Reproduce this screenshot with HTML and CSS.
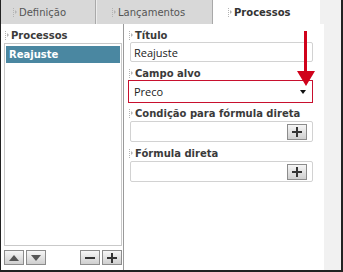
FILE: index.html
```html
<!DOCTYPE html>
<html lang="pt">
<head>
    <meta charset="UTF-8">
    <title>Processos</title>
    <link rel="stylesheet" href="styles.css">
</head>
<body>

    <div class="frame">

        <!-- Abas -->
        <div class="tabs">
            <div class="tab tab-first"><span class="grip"></span>Definição</div>
            <div class="tab"><span class="grip"></span>Lançamentos</div>
            <div class="tab active"><span class="grip"></span>Processos</div>
        </div>

        <div class="main">
            <div class="panel">

                <!-- Lista de processos -->
                <div class="left">
                    <div class="label"><span class="grip"></span>Processos</div>
                    <ul class="list">
                        <li class="selected">Reajuste</li>
                    </ul>
                    <div class="list-actions">
                        <div class="btn-group">
                            <button class="btn"><span class="tri up"></span></button>
                            <button class="btn"><span class="tri down"></span></button>
                        </div>
                        <div class="btn-group">
                            <button class="btn"><span class="minus"></span></button>
                            <button class="btn"><span class="plus"></span></button>
                        </div>
                    </div>
                </div>

                <!-- Formulário do processo -->
                <div class="right">
                    <div class="label"><span class="grip"></span>Título</div>
                    <div class="field">Reajuste</div>

                    <div class="label"><span class="grip"></span>Campo alvo</div>
                    <div class="field select">Preco<span class="caret"></span></div>

                    <div class="label"><span class="grip"></span>Condição para fórmula direta</div>
                    <div class="field box"><button class="btn"><span class="plus"></span></button></div>

                    <div class="label"><span class="grip"></span>Fórmula direta</div>
                    <div class="field box"><button class="btn"><span class="plus"></span></button></div>

                    <!-- seta de destaque -->
                    <svg class="arrow" width="20" height="56" viewBox="0 0 20 56">
                        <rect x="8" y="0" width="3" height="42" fill="#d0021b"/>
                        <polygon points="1,40 19,40 10,55" fill="#d0021b"/>
                    </svg>
                </div>

            </div>
        </div>
    </div>

</body>
</html>
```

FILE: styles.css
```css
* {
    box-sizing: border-box;
}

body {
    margin: 0;
    font-family: "DejaVu Sans", Verdana, sans-serif;
    font-size: 10px;
    color: #333;
    background-color: #fff;
}

.frame {
    width: 343px;
    height: 272px;
    border-left: 1px solid #222;
    border-right: 2px solid #222;
    border-bottom: 2px solid #222;
    background-color: #f1f1f1;
    display: flex;
    flex-direction: column;
}

/* Abas */
.tabs {
    height: 24px;
    display: flex;
}

.tab {
    display: flex;
    align-items: center;
    padding-left: 15px;
    background-color: #d8d8d8;
    color: #555;
    border-right: 1px solid #a9a9a9;
    border-left: 1px solid #ececec;
    width: 117px;
}

.tab-first {
    width: 95px;
    padding-left: 12px;
    border-left: none;
}

.tab.active {
    width: 107px;
    background-color: #fff;
    color: #333;
    font-weight: bold;
    border: none;
}

.grip {
    display: inline-block;
    width: 4px;
    height: 9px;
    margin-right: 2px;
    background: linear-gradient(#b4b4b4 50%, transparent 50%) 0 0 / 1px 2px repeat-y;
    position: relative;
}

.grip::after {
    content: "";
    position: absolute;
    left: 2px;
    top: 2.5px;
    border-left: 2px solid #b4b4b4;
    border-top: 2px solid transparent;
    border-bottom: 2px solid transparent;
}

/* Conteúdo */
.main {
    flex: 1;
    display: flex;
}

.panel {
    width: 323px;
    background-color: #fff;
    display: flex;
}

.label {
    height: 14px;
    display: flex;
    align-items: center;
    font-weight: bold;
    color: #3a3a3a;
}

.left {
    width: 123px;
    border-right: 1px solid #9a9a9a;
    padding: 4px 1px 0 3px;
    display: flex;
    flex-direction: column;
}

.left .label {
    padding-left: 1px;
}

.list {
    flex: 1;
    list-style: none;
    margin: 1px 0 0;
    padding: 2px 1px;
    border: 1px solid #c9c9c9;
}

.list li {
    height: 17px;
    line-height: 17px;
    padding-left: 3px;
    font-weight: bold;
}

.list li.selected {
    background-color: #4a87a1;
    color: #fff;
}

.list-actions {
    height: 24px;
    padding-top: 4px;
    display: flex;
    justify-content: space-between;
}

.btn-group {
    display: flex;
    gap: 2px;
}

.btn {
    width: 20px;
    height: 15px;
    padding: 0;
    border: 1px solid #8c8c8c;
    background: linear-gradient(#f6f6f6, #cfcfcf);
    display: flex;
    align-items: center;
    justify-content: center;
}

.tri {
    width: 0;
    height: 0;
    border-left: 5px solid transparent;
    border-right: 5px solid transparent;
}

.tri.up {
    border-bottom: 6px solid #555;
}

.tri.down {
    border-top: 6px solid #555;
}

.minus,
.plus {
    width: 10px;
    height: 10px;
    position: relative;
}

.minus::before,
.plus::before,
.plus::after {
    content: "";
    position: absolute;
    background-color: #333;
}

.minus::before,
.plus::before {
    left: 0;
    top: 4px;
    width: 10px;
    height: 2px;
}

.plus::after {
    left: 4px;
    top: 0;
    width: 2px;
    height: 10px;
}

.right {
    flex: 1;
    padding: 4px 11px 0 5px;
    position: relative;
}

.right .field {
    margin-left: 1px;
}

.field {
    height: 20px;
    margin-bottom: 4px;
    border: 1px solid #d2d2d2;
    border-radius: 2px;
    padding-left: 3px;
    display: flex;
    align-items: center;
    font-family: "Open Sans", "DejaVu Sans", sans-serif;
    font-size: 11px;
    color: #222;
}

.right .select {
    height: 23px;
    margin: 0 0 3px -1px;
    padding-left: 5px;
    padding-right: 6px;
    border: 1px solid #c8102e;
    border-radius: 0;
    justify-content: space-between;
}

.caret {
    width: 0;
    height: 0;
    border-left: 3.5px solid transparent;
    border-right: 3.5px solid transparent;
    border-top: 4px solid #111;
}

.box {
    height: 21px;
    margin-top: 1px;
    justify-content: flex-end;
    padding-right: 5px;
}

.box .btn {
    height: 16px;
}

.arrow {
    position: absolute;
    left: 172px;
    top: 7px;
}
```
